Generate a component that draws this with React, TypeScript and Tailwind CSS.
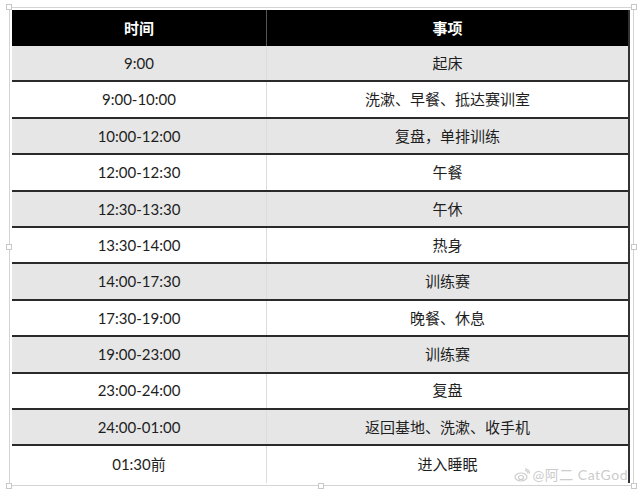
const rows: [string, string][] = [
  ["9:00", "起床"],
  ["9:00-10:00", "洗漱、早餐、抵达赛训室"],
  ["10:00-12:00", "复盘，单排训练"],
  ["12:00-12:30", "午餐"],
  ["12:30-13:30", "午休"],
  ["13:30-14:00", "热身"],
  ["14:00-17:30", "训练赛"],
  ["17:30-19:00", "晚餐、休息"],
  ["19:00-23:00", "训练赛"],
  ["23:00-24:00", "复盘"],
  ["24:00-01:00", "返回基地、洗漱、收手机"],
  ["01:30前", "进入睡眠"],
];

function Handle({ className }: { className: string }) {
  return (
    <div
      className={`absolute h-[6px] w-[6px] border border-[#c8c8c8] bg-white ${className}`}
    />
  );
}

export default function App() {
  return (
    <div
      className="relative h-[492px] w-[640px] overflow-hidden bg-white"
      style={{ fontFamily: 'Lato, "Noto Sans CJK SC", sans-serif' }}
    >
      <div className="relative ml-[9px] mt-[7px] w-[625px] border border-[#d4d4d4] p-[2px] pr-[3px]">
        {/* selection handles */}
        <Handle className="-left-[4px] -top-[4px]" />
        <Handle className="-right-[4px] -top-[4px]" />
        <Handle className="-left-[4px] top-[236px]" />
        <Handle className="-right-[4px] top-[236px]" />
        <Handle className="-bottom-[4px] -left-[4px]" />
        <Handle className="-bottom-[4px] left-[308px]" />
        <Handle className="-bottom-[4px] -right-[4px]" />

        <div className="border-r-[2px] border-[#333]">
          <div className="flex h-[36px] bg-black text-[15px] font-bold text-white">
            <div className="flex w-[255px] items-center justify-center border-r border-[#555]">
              时间
            </div>
            <div className="flex flex-1 items-center justify-center">事项</div>
          </div>
          {rows.map(([time, item], i) => (
            <div
              key={time}
              className={`flex h-[36.4px] text-[15px] text-[#1e1e1e] ${
                i % 2 === 0 ? "bg-[#e6e6e6]" : "bg-white"
              } ${i < rows.length - 1 ? "border-b-[2px] border-[#2a2a2a]" : ""}`}
            >
              <div className="flex w-[255px] items-center justify-center border-r border-[#dcdcdc]">
                {time}
              </div>
              <div className="flex flex-1 items-center justify-center">{item}</div>
            </div>
          ))}
        </div>
      </div>

      {/* watermark */}
      <div className="absolute bottom-[7px] right-[12px] flex items-center gap-[3px] text-[14px] text-[#cccccc]">
        <svg width="16" height="14" viewBox="0 0 16 14" fill="none" stroke="#cccccc" strokeWidth="1.2">
          <ellipse cx="7" cy="9" rx="6" ry="4" />
          <ellipse cx="7" cy="9.5" rx="2.5" ry="2" />
          <path d="M11 2.5a3 3 0 0 1 3 3" />
          <path d="M11 0.8a4.8 4.8 0 0 1 4.5 4.7" />
        </svg>
        <span className="tracking-[0.5px]">@阿二 CatGod</span>
      </div>
    </div>
  );
}
